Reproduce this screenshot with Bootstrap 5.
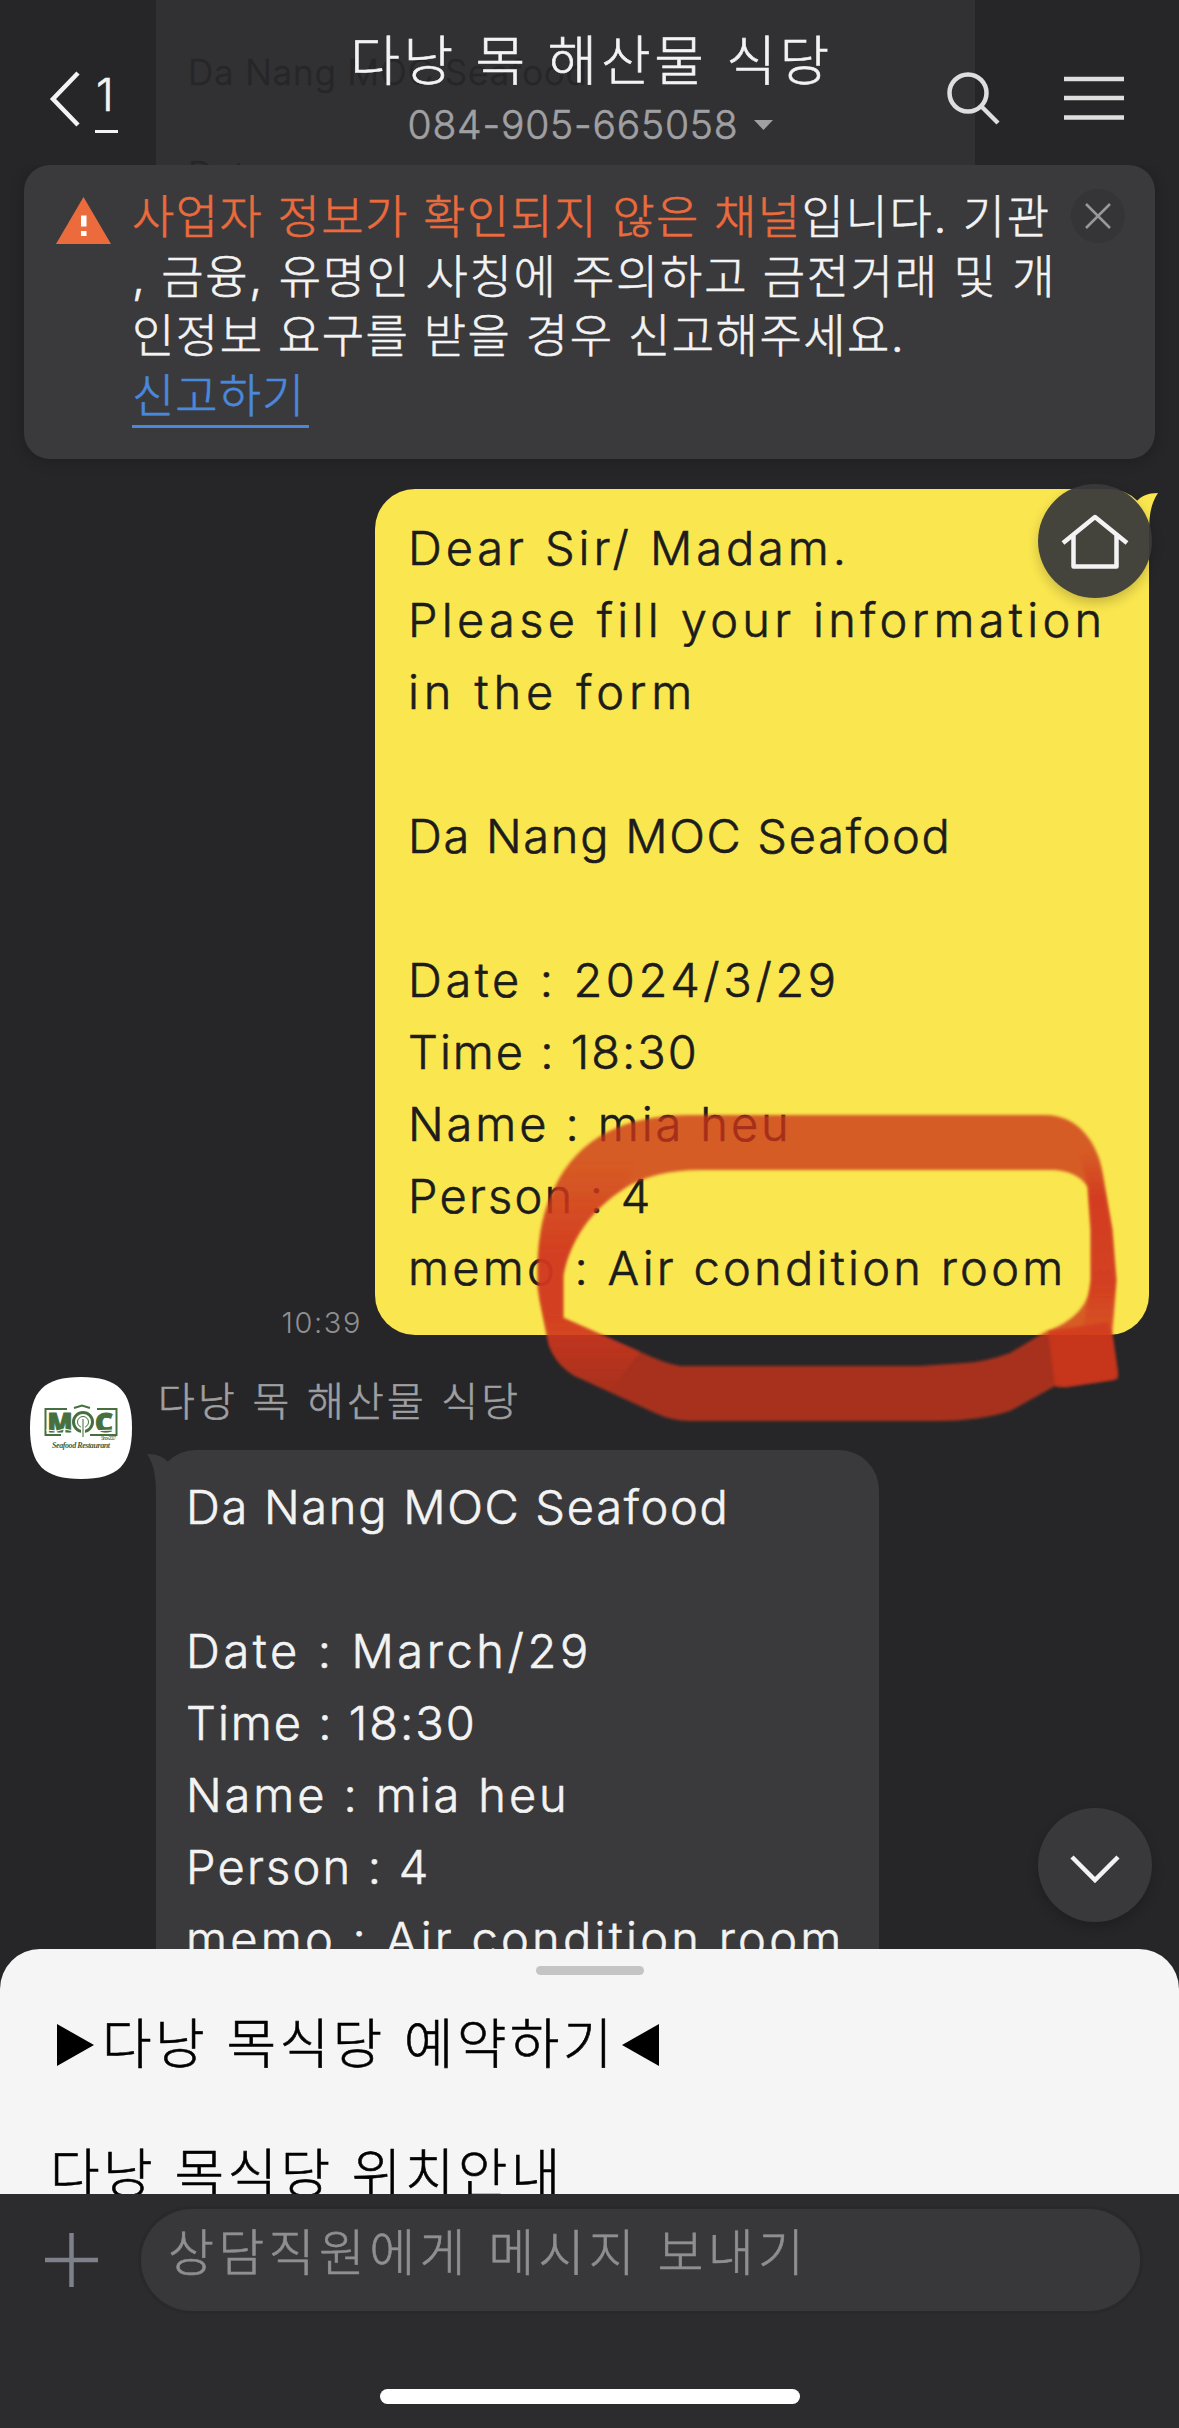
<!DOCTYPE html>
<html lang="ko">
<head>
<meta charset="utf-8">
<meta name="viewport" content="width=device-width, initial-scale=1">
<title>다낭 목 해산물 식당</title>
<link href="https://cdn.jsdelivr.net/npm/bootstrap@5.3.0/dist/css/bootstrap.min.css" rel="stylesheet">
<style>
body{font-family:Inter,"Noto Sans CJK KR",sans-serif;font-weight:300;background:#262628;color:#f3f3f3;-webkit-text-stroke:.6px currentColor}
.screen{width:1179px;height:2428px}
svg{display:block;flex:none;-webkit-text-stroke:0}
.topbar{height:165px;z-index:1}
.ghost{left:156px;top:0;width:819px;height:165px;background:#313133;color:#262628}
.ghost p{margin:47px 0 0 32px;font-size:35px;line-height:51px;letter-spacing:1px;white-space:nowrap}
.ghost p + p{margin-top:51px}
.back{width:240px;padding-left:49px;padding-top:71px}
.unread{margin-left:15px;padding:0 1px;width:23px;height:62px;font-size:45px;line-height:48px;border-bottom:3px solid #f3f3f3}
.room-title{margin-top:24px;font-size:54px;line-height:76px;letter-spacing:3.6px;padding-left:4px;white-space:nowrap}
.room-sub{font-size:39px;line-height:50px;letter-spacing:.8px;color:#a0a0a2;padding-left:2px}
.tools{width:240px;padding:71px 54px 0 0}
.search{margin-left:7px}
.notice{margin:0 24px;width:1131px;height:294px;border-radius:26px;background:#3a3a3c;padding:22px 30px 0 31px;box-shadow:0 2px 14px rgba(0,0,0,.22)}
.notice-text{margin-left:20px;font-size:46px;line-height:59.5px;white-space:nowrap;letter-spacing:1.7px}
.notice-text .n3{letter-spacing:1.5px}
.warn{color:#ec6b3c;letter-spacing:1.4px}
.report{color:#4a88dc;border-bottom:3px solid #4a88dc;width:177px;height:62px;letter-spacing:1px}
.close-dot{right:30px;top:24px;width:54px;height:54px;border-radius:50%;background:#353537}
.bubble{position:relative;font-size:47px;line-height:72px;white-space:nowrap;border-radius:40px}
.bubble div{height:72px;letter-spacing:3.25px}
.mine{width:774px;height:846px;margin:30px 30px 0 0;padding:23px 0 0 33px;background:#fae64f;color:#1c1c1c}
.theirs{width:723px;height:600px;padding:21px 0 0 30px;background:#3a3a3c}
.bubble .k1{letter-spacing:3.9px}.bubble .k2{letter-spacing:4.3px}.bubble .k3{letter-spacing:4.9px}
.bubble .k4{letter-spacing:1.7px}.bubble .k5{letter-spacing:3.6px}.bubble .k6{letter-spacing:2px}
.bubble .k7{letter-spacing:2.9px}.bubble .k8{letter-spacing:2.2px}
.tail{position:absolute;top:4px}
.mine .tail{right:-9px}
.theirs .tail{left:-9px}
.stamp{font-size:29px;line-height:24px;letter-spacing:1.6px;color:#909092;margin-right:13px;-webkit-text-stroke:0}
.chat{height:1784px;overflow:hidden}
.reply{margin-top:42px}
.avatar{margin-left:30px;margin-right:24px}
.sender{font-size:40px;line-height:50px;height:73px;padding-left:2px;letter-spacing:3.2px;color:#a0a0a2}
.fab{left:1038px;width:114px;height:114px;border-radius:50%;box-shadow:0 5px 12px rgba(0,0,0,.2)}
.fab-home{top:484px;background:rgba(57,57,59,.94)}
.fab-down{top:1808px;padding-top:7px;background:#39393c}
.scribble{left:500px;top:1080px}
.sheet-wrap{height:245px;overflow:hidden}
.sheet{height:300px;border-radius:40px 40px 0 0;background:#f5f5f5;color:#000;font-size:54px;padding-top:17px;letter-spacing:3.3px}
.handle{width:108px;height:9px;border-radius:5px;background:#c4c4c4}
.choice{line-height:76px;white-space:nowrap}
.choice-first{margin:32px 0 54px 57px}
.choice-next{margin-left:50px}
.choice .arrow-end{margin-left:6px}
.composer{height:234px;background:#2c2c2e;padding-top:15px}
.plus{margin-left:45px;margin-right:43px;margin-top:24px}
.field{width:999px;height:102px;border-radius:51px;background:#38383a;color:#8f8f91;padding-left:27px;font-size:50px;line-height:89px;letter-spacing:4.3px;box-shadow:0 0 0 3px #29292b}
.homebar{width:420px;height:15px;border-radius:8px;background:#fff;margin-top:78px}
</style>
</head>
<body>
<div class="screen position-relative overflow-hidden d-flex flex-column">
  <div class="ghost position-absolute overflow-hidden"><p>Da Nang MOC Seafood</p><p>Date :</p></div>

  <header class="topbar position-relative d-flex justify-content-between align-items-start">
    <div class="back d-flex">
      <svg width="31" height="56" viewBox="0 0 31 56" fill="none" stroke="#f3f3f3" stroke-width="4.5"><path d="M29 2 4 28 29 54"/></svg>
      <div class="unread">1</div>
    </div>
    <div class="text-center">
      <div class="room-title">다낭 목 해산물 식당</div>
      <div class="room-sub d-flex justify-content-center align-items-center">084-905-665058
        <svg class="ms-3" width="19" height="10"><path d="M0 0h19L9.500 10z" fill="#a0a0a2"/></svg>
      </div>
    </div>
    <div class="tools d-flex justify-content-between">
      <svg class="search" width="54" height="54" viewBox="0 0 54 54" fill="none" stroke="#dedede" stroke-width="4.500"><circle cx="22" cy="22" r="18.500"/><path d="M35 35 52 52"/></svg>
      <svg width="61" height="54" viewBox="0 0 61 54" stroke="#dedede" stroke-width="4.500"><path d="M0 8H60M0 27H60M0 46.500H60"/></svg>
    </div>
  </header>

  <main class="chat flex-shrink-0 d-flex flex-column">
    <section class="notice position-relative flex-shrink-0 d-flex align-items-start">
      <svg class="mt-2" width="57" height="50" viewBox="0 0 57 50"><path d="M28.500 2 56 49H1z" fill="#ec6b3c"/><path d="M26 20.500h5.500v11H26zM26 36h5.500v5H26z" fill="#fff"/></svg>
      <div class="notice-text">
        <div><span class="warn">사업자 정보가 확인되지 않은 채널</span>입니다. 기관</div>
        <div>, 금융, 유명인 사칭에 주의하고 금전거래 및 개</div>
        <div class="n3">인정보 요구를 받을 경우 신고해주세요.</div>
        <div class="report">신고하기</div>
      </div>
      <div class="close-dot position-absolute d-flex align-items-center justify-content-center">
        <svg width="26" height="26" stroke="#99999b" stroke-width="2.500"><path d="M1 1 25 25M25 1 1 25"/></svg>
      </div>
    </section>

    <div class="d-flex justify-content-end align-items-end flex-shrink-0">
      <div class="stamp">10:39</div>
      <div class="bubble mine">
        <svg class="tail" width="60" height="50" viewBox="0 0 60 50"><path d="M60 0C50 0 43 3 38 9L20 30 51 45C51 24 52 12 60 0z" fill="#fae64f"/></svg>
        <div class="k1">Dear Sir/ Madam.</div>
        <div class="k2">Please fill your information</div>
        <div class="k3">in the form</div>
        <div></div>
        <div class="k4">Da Nang MOC Seafood</div>
        <div></div>
        <div class="k5">Date : 2024/3/29</div>
        <div class="k6">Time : 18:30</div>
        <div class="k7">Name : mia heu</div>
        <div class="k8">Person : 4</div>
        <div>memo : Air condition room</div>
      </div>
    </div>

    <div class="reply d-flex align-items-start flex-shrink-0">
      <svg class="avatar" width="102" height="102" viewBox="0 0 102 102">
        <path d="M51 0C88 0 102 14 102 51S88 102 51 102 0 88 0 51 14 0 51 0z" fill="#fff"/>
        <path d="M37 32H15.500V58H31M67 32H86.500V58H60M44 31 52 28.500 60 31" fill="none" stroke="#46713f" stroke-width="2"/>
        <text x="17.500" y="54.500" font-family="Open Sans" font-weight="800" font-size="26" textLength="25" lengthAdjust="spacingAndGlyphs" fill="#46713f" stroke="#46713f" stroke-width="1">M</text>
        <circle cx="53" cy="45" r="9.500" fill="none" stroke="#46713f" stroke-width="3"/><circle cx="53" cy="45" r="5.500" fill="none" stroke="#46713f" stroke-width="1"/>
        <path d="M53 45V59" stroke="#fff" stroke-width="4"/><path d="M53 42V60" stroke="#7f9d79" stroke-width="1.500"/>
        <text x="65" y="54.500" font-family="Open Sans" font-weight="800" font-size="26" textLength="18" lengthAdjust="spacingAndGlyphs" fill="#46713f" stroke="#46713f" stroke-width="1">C</text>
        <path d="M16 53 27 54 34 52 44 54M60 54 84 53" stroke="#fff" stroke-width="1.200" fill="none"/>
        <text x="71" y="62.500" font-family="Liberation Sans" font-size="4.500" textLength="15" fill="#46713f">Since 2017</text>
        <text x="22" y="70.500" font-family="Liberation Serif" font-style="italic" font-weight="700" font-size="8" textLength="58" fill="#3f5f3a">Seafood Restaurant</text>
      </svg>
      <div>
        <div class="sender">다낭 목 해산물 식당</div>
        <div class="bubble theirs">
          <svg class="tail" width="60" height="50" viewBox="0 0 60 50"><path d="M0 0C10 0 17 3 22 9L40 30 9 45C9 24 8 12 0 0z" fill="#3a3a3c"/></svg>
          <div class="k4">Da Nang MOC Seafood</div>
          <div></div>
          <div class="k5">Date : March/29</div>
          <div class="k6">Time : 18:30</div>
          <div class="k7">Name : mia heu</div>
          <div class="k8">Person : 4</div>
          <div>memo : Air condition room</div>
        </div>
      </div>
    </div>
  </main>

  <section class="sheet-wrap flex-shrink-0">
    <div class="sheet">
      <div class="handle mx-auto"></div>
      <div class="choice choice-first d-flex align-items-center">
        <svg width="37" height="42"><path d="M0 0 37 21 0 42z"/></svg>
        <span class="ms-2">다낭 목식당 예약하기</span>
        <svg class="arrow-end" width="37" height="42"><path d="M37 0 0 21 37 42z"/></svg>
      </div>
      <div class="choice choice-next">다낭 목식당 위치안내</div>
    </div>
  </section>

  <footer class="composer flex-shrink-0">
    <div class="d-flex align-items-start">
      <svg class="plus" width="53" height="54" stroke="#7e808a" stroke-width="4.500"><path d="M0 27H53M26.500 0V54"/></svg>
      <div class="field">상담직원에게 메시지 보내기</div>
    </div>
    <div class="homebar mx-auto"></div>
  </footer>

  <svg class="scribble position-absolute" width="660" height="370" viewBox="500 1080 660 370">
    <defs>
      <filter id="soft" x="-5%" y="-5%" width="110%" height="110%"><feGaussianBlur stdDeviation="1.600"/></filter>
      <linearGradient id="sideL" gradientUnits="userSpaceOnUse" x1="0" y1="1160" x2="0" y2="1395"><stop offset="0" stop-color="#d2371e" stop-opacity="0"/><stop offset=".4" stop-color="#d2371e" stop-opacity=".8"/><stop offset=".65" stop-color="#d2371e" stop-opacity=".8"/><stop offset="1" stop-color="#d2371e" stop-opacity="0"/></linearGradient>
      <linearGradient id="sideR" gradientUnits="userSpaceOnUse" x1="0" y1="1150" x2="0" y2="1335"><stop offset="0" stop-color="#d2371e" stop-opacity="0"/><stop offset=".25" stop-color="#d2371e" stop-opacity=".85"/><stop offset=".75" stop-color="#d2371e" stop-opacity=".75"/><stop offset="1" stop-color="#d2371e" stop-opacity=".2"/></linearGradient>
    </defs>
    <path filter="url(#soft)" fill="#cc3319" fill-opacity=".78" fill-rule="evenodd" d="M690 1115H1045C1078 1115 1098 1142 1103 1175L1112 1230 1116 1280 1112 1332 1118 1372Q1118 1378 1112 1380L1065 1387 1055 1386 1010 1411Q980 1421 935 1421H690Q672 1421 655 1413L575 1376Q556 1365 549 1345L540 1300C535 1250 540 1215 556 1185Q590 1115 690 1115zM700 1170H1055Q1078 1172 1088 1187L1091 1230V1280Q1090 1316 1045 1332L1010 1353Q985 1362 965 1363L920 1366H680Q664 1363 645 1354L563 1318V1275C570 1240 590 1210 625 1188Q655 1170 700 1170z"/>
    <g filter="url(#soft)">
      <path fill="url(#sideL)" d="M570 1160Q535 1210 538 1290L549 1345Q556 1365 575 1376L610 1392 640 1352 563 1318V1275C570 1240 590 1210 625 1188L640 1150z"/>
      <path fill="url(#sideR)" d="M1078 1150 1098 1155 1112 1230 1116 1280 1112 1335H1082L1088 1300 1091 1280V1230L1088 1187z"/>
      <path fill="#d2371e" fill-opacity=".75" d="M1048 1331 1108 1322 1112 1335 1118 1379 1065 1387 1055 1386z"/>
    </g>
  </svg>

  <div class="fab fab-home position-absolute d-flex align-items-center justify-content-center">
    <svg width="68" height="58" viewBox="0 0 68 58" fill="none" stroke="#f3f3f3" stroke-width="4.500"><path d="M2 31 34 5 66 31M12.500 23V54.500H55.500V23" stroke-linejoin="round"/></svg>
  </div>
  <div class="fab fab-down position-absolute d-flex align-items-center justify-content-center">
    <svg width="50" height="30" viewBox="0 0 50 30" fill="none" stroke="#f3f3f3" stroke-width="4.500"><path d="M2 3 25 26 48 3"/></svg>
  </div>
</div>
<script src="https://cdn.jsdelivr.net/npm/bootstrap@5.3.0/dist/js/bootstrap.bundle.min.js"></script>
</body>
</html>
